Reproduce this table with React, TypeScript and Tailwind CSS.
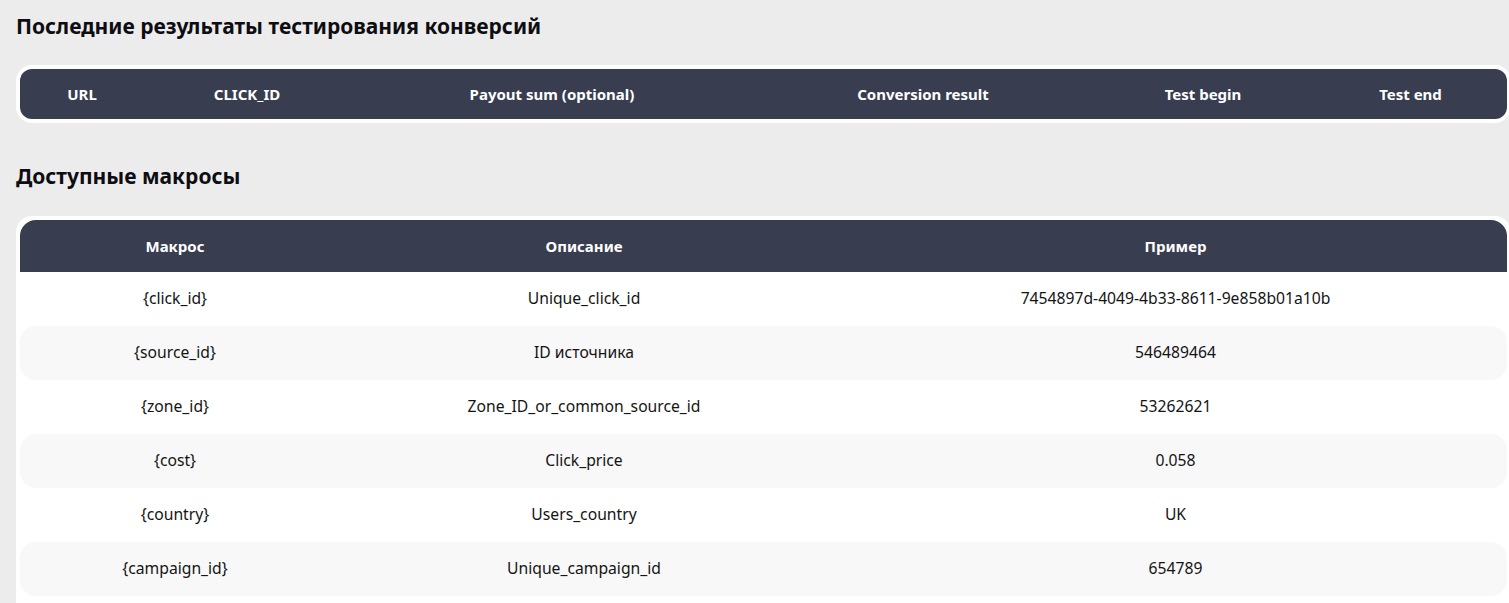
import React from 'react';

const font = { fontFamily: '"Noto Sans", "Liberation Sans", sans-serif' };

const testCols = [
  { label: 'URL', w: 'w-[124px]' },
  { label: 'CLICK_ID', w: 'w-[206px]' },
  { label: 'Payout sum (optional)', w: 'w-[404px]' },
  { label: 'Conversion result', w: 'w-[338px]' },
  { label: 'Test begin', w: 'w-[222px]' },
  { label: 'Test end', w: 'flex-1' },
];

const macros = [
  { macro: '{click_id}', desc: 'Unique_click_id', example: '7454897d-4049-4b33-8611-9e858b01a10b' },
  { macro: '{source_id}', desc: 'ID источника', example: '546489464' },
  { macro: '{zone_id}', desc: 'Zone_ID_or_common_source_id', example: '53262621' },
  { macro: '{cost}', desc: 'Click_price', example: '0.058' },
  { macro: '{country}', desc: 'Users_country', example: 'UK' },
  { macro: '{campaign_id}', desc: 'Unique_campaign_id', example: '654789' },
];

const App: React.FC = () => {
  return (
    <div className="min-h-screen w-full overflow-hidden bg-[#ececec] pl-4 pt-[12px]" style={font}>
      <h2 className="text-[21px] font-bold leading-[28px] text-[#0d0d12]">
        Последние результаты тестирования конверсий
      </h2>

      <div className="mt-[25px] w-[1495px] rounded-[16px] bg-white p-1">
        <div className="flex h-[50px] items-center rounded-[12px] bg-[#383d4f] text-[15px] font-bold text-white">
          {testCols.map((c) => (
            <div key={c.label} className={`${c.w} text-center`}>
              {c.label}
            </div>
          ))}
        </div>
      </div>

      <h2 className="mt-[39px] text-[21px] font-bold leading-[28px] text-[#0d0d12]">Доступные макросы</h2>

      <div className="mt-[26px] w-[1495px] rounded-t-[16px] bg-white px-1 pt-1">
        <div className="flex h-[52px] items-center rounded-t-[16px] bg-[#383d4f] text-[15px] font-bold text-white">
          <div className="w-[310px] text-center">Макрос</div>
          <div className="w-[508px] text-center">Описание</div>
          <div className="flex-1 pl-[6px] text-center">Пример</div>
        </div>
        {macros.map((m, i) => (
          <div
            key={m.macro}
            className={`flex h-[54px] items-center text-[15.7px] text-[#141414] ${
              i % 2 === 1 ? 'rounded-[16px] bg-[#f8f8f8]' : ''
            }`}
          >
            <div className="w-[310px] text-center">{m.macro}</div>
            <div className="w-[508px] text-center">{m.desc}</div>
            <div className="flex-1 pl-[6px] text-center">{m.example}</div>
          </div>
        ))}
        <div className="h-6" />
      </div>
    </div>
  );
};

export default App;
